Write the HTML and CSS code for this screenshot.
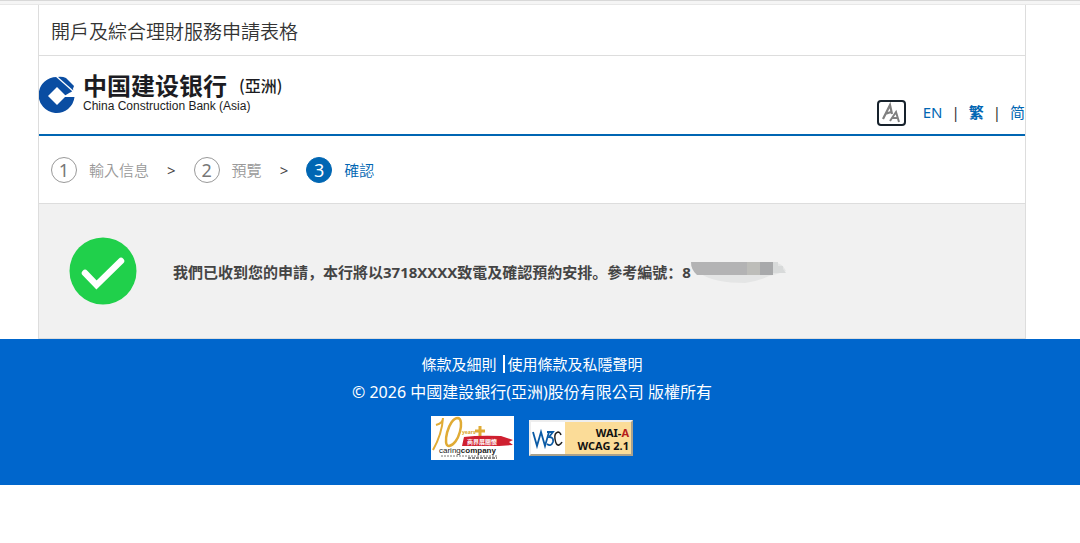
FILE: index.html
```html
<!DOCTYPE html>
<html lang="zh-Hant">
<head>
    <meta charset="UTF-8">
    <meta name="viewport" content="width=device-width, initial-scale=1.0">
    <title>開戶及綜合理財服務申請表格</title>
    <link rel="stylesheet" href="styles.css">
</head>
<body>
    <div class="top-strip"></div>

    <div class="container">
        <h1 class="page-title">開戶及綜合理財服務申請表格</h1>

        <header class="header">
            <a class="logo" href="#" aria-label="中国建设银行(亞洲)">
                <svg class="logo-mark" viewBox="0 0 36 38" aria-hidden="true">
                    <path fill="#0a4da2" d="M18 1A18 18 0 1 0 35.500 21H27L30.500 17.500 34.500 14 24 3Z"/>
                    <path fill="#0a4da2" d="M18 1q5-1 9 1l8 8-1.500 4Z"/>
                    <path stroke="#fff" stroke-width="1.300" d="M17.500.5L35 16"/>
                    <path fill="#fff" d="M18 11l9 9-9 9-9-9Z"/>
                    <path fill="#fff" d="M26 19.500L31 16.500 36 17v4H26Z"/>
                </svg>
                <span class="logo-text">
                    <span class="logo-cn" lang="zh-Hans">中国建设银行<small>(亞洲)</small></span>
                    <span class="logo-en">China Construction Bank (Asia)</span>
                </span>
            </a>
            <nav class="tools">
                <button class="font-btn" type="button" aria-label="字體大小">
                    <svg viewBox="0 0 24 22" fill="none" stroke="#808080" aria-hidden="true">
                        <path stroke-width="2.200" d="M4 17L11 3l2 9M6 12l6-2"/>
                        <path stroke-width="2" d="M11 19l6-9 3 10M13 16h6"/>
                    </svg>
                </button>
                <ul class="lang">
                    <li><a href="#">EN</a></li>
                    <li><a class="active" href="#">繁</a></li>
                    <li><a href="#">简</a></li>
                </ul>
            </nav>
        </header>

        <ol class="steps">
            <li class="step"><span class="num">1</span>輸入信息</li>
            <li class="step"><span class="num">2</span>預覽</li>
            <li class="step current" aria-current="step"><span class="num">3</span>確認</li>
        </ol>

        <main class="result">
            <svg class="tick" viewBox="0 0 68 68" aria-hidden="true">
                <circle cx="34" cy="34" r="33.500" fill="#20d04b"/>
                <path d="M16 36l11.500 12L52 24" fill="none" stroke="#fff" stroke-width="6.500" stroke-linecap="round"/>
            </svg>
            <p class="message" lang="zh-Hans">我們已收到您的申請，本行將以3718XXXX致電及確認預約安排。參考編號：8</p>
            <svg class="mask" viewBox="0 0 98 26" aria-hidden="true">
                <path fill="#e4e5e5" d="M0 4h82q10 1 13 9-8 3-17 5-10 5-24 7-30 0-44-9L0 8Z"/>
                <path fill="#d8dada" d="M82 4h5v4h5v3l3 4H82Z"/>
                <path fill="#b3b3b4" d="M0 4h82v13H6Q0 12 0 4Z"/>
                <path fill="#bdbdb9" d="M56 4h13v13H56Z"/>
                <path fill="#a8a9ab" d="M69 4h13v13H69Z"/>
            </svg>
        </main>
    </div>

    <footer class="footer">
        <ul class="footer-links">
            <li><a href="#">條款及細則</a></li>
            <li><a href="#">使用條款及私隱聲明</a></li>
        </ul>
        <p class="copyright">© 2026 中國建設銀行(亞洲)股份有限公司 版權所有</p>
        <div class="badges">
            <a href="#" aria-label="caring company">
                <svg class="badge-caring" viewBox="0 0 83 44">
                    <path fill="#fff" d="M0 0h83v44H0Z"/>
                    <g fill="none" stroke="#e0ab35">
                        <path stroke-width="2" d="M5 9Q12 7 12 2 11 18 2 34"/>
                        <path stroke-width="2.500" d="M27 2C17 2 11 31 18 30 28 29 34 3 27 2Z"/>
                        <path stroke-width="3" d="M49 10v10M44 15h10"/>
                    </g>
                    <path fill="#cf2030" d="M33 21q15-2 37-1l12 4-4 2 4 3-14 1H31Z"/>
                    <text class="caring-years" x="31" y="18">years</text>
                    <text class="caring-cn" x="36" y="28">商界展關懷</text>
                    <text class="caring-name" x="8" y="37">caring<tspan class="caring-bold">company</tspan></text>
                    <path stroke="#777" stroke-dasharray="2 1" d="M10 40h56"/>
                    <path stroke="#888" stroke-width="2" stroke-dasharray="3 1" d="M37 42h29"/>
                </svg>
            </a>
            <a href="#" aria-label="W3C WAI-A WCAG 2.1">
                <svg class="badge-w3c" viewBox="0 0 104 36">
                    <path fill="#a9a18c" d="M0 0h104v36H0Z"/>
                    <path fill="#eee" d="M0 0h104l-2 2H2v32l-2 2Z"/>
                    <path fill="#fff" d="M2 2h34v32H2Z"/>
                    <path fill="#fbdc98" d="M36 2h66v32H36Z"/>
                    <g fill="none" stroke="#0a5aa5" stroke-width="1.800">
                        <path d="M4 12l4 14 4-14 4 14 4-14"/>
                        <path d="M18 12h6l-4 5q5 0 4 5-2 5-6 2"/>
                        <path stroke="#222" stroke-width="1.500" d="M32 15q-1-3-3-3-4 1-3 7 1 7 4 6 2-1 3-3"/>
                    </g>
                    <text class="w3c-text" x="100" y="17">WAI-<tspan class="w3c-level">A</tspan></text>
                    <text class="w3c-text" x="100" y="30">WCAG 2.1</text>
                </svg>
            </a>
        </div>
    </footer>
</body>
</html>
```
FILE: styles.css
```css
:root {
    --blue: #0066b3;
    --footer-blue: #0066cc;
    --line: #dddddd;
    --text: #333;
    --grey: #999;
}

* {
    margin: 0;
    padding: 0;
    box-sizing: border-box;
}

body {
    font-family: "Noto Sans", "Noto Sans CJK TC", sans-serif;
    font-size: 15px;
    color: var(--text);
    background-color: white;
}

a {
    color: inherit;
    text-decoration: none;
}

ul,
ol {
    list-style: none;
}

svg {
    display: block;
}

.top-strip {
    height: 5px;
    background-color: #f5f5f5;
    border-top: 1px solid #d8d8d8;
    border-bottom: 1px solid #e8e8e8;
}

.container {
    margin: 0 54px 0 38px;
    border: 1px solid var(--line);
    border-top: none;
}

.page-title {
    height: 51px;
    padding: 0 12px;
    border-bottom: 1px solid var(--line);
    font-family: "Noto Sans CJK TC", sans-serif;
    font-size: 19px;
    font-weight: 350;
    line-height: 52px;
}

.header {
    display: flex;
    justify-content: space-between;
    height: 80px;
    border-bottom: 2px solid var(--blue);
}

.logo {
    display: flex;
    align-items: center;
    gap: 8px;
}

.logo-mark {
    width: 36px;
    height: 38px;
}

.logo-text {
    display: flex;
    flex-direction: column;
    gap: 2px;
    padding-bottom: 4px;
    color: #1c1c22;
}

.logo-cn {
    display: flex;
    align-items: center;
    gap: 12px;
    font-family: "Noto Sans CJK SC", sans-serif;
    font-size: 24px;
    font-weight: 700;
    line-height: 24px;
}

.logo-cn small {
    font-size: 16px;
    font-weight: 500;
}

.logo-en {
    font-family: "Liberation Sans", Arial, sans-serif;
    font-size: 12px;
    line-height: 14px;
}

.tools {
    display: flex;
    align-items: flex-end;
    gap: 17px;
    padding-bottom: 8px;
}

.font-btn {
    width: 29px;
    height: 26px;
    border: 2px solid #17222c;
    border-radius: 4px;
    background-color: white;
}

.font-btn svg {
    width: 24px;
    height: 22px;
}

.lang {
    display: flex;
    color: var(--blue);
    line-height: 28px;
}

.lang li + li::before {
    content: "|";
    padding: 0 9px;
    color: #333;
}

.lang .active {
    font-weight: bold;
}

.steps {
    display: flex;
    align-items: center;
    height: 67px;
    padding: 0 12px;
}

.step {
    display: flex;
    align-items: center;
    color: var(--grey);
    font-family: "Noto Sans CJK TC", sans-serif;
    font-weight: 350;
}

.step + .step::before {
    content: ">";
    padding: 0 18px;
    color: #444;
    font-family: "Noto Sans", sans-serif;
    font-weight: 400;
}

.num {
    width: 26px;
    height: 26px;
    margin-right: 12px;
    border: 1px solid var(--grey);
    border-radius: 50%;
    color: #777;
    font-family: "Noto Sans", sans-serif;
    font-size: 18px;
    font-weight: 400;
    line-height: 24px;
    text-align: center;
}

.current {
    color: var(--blue);
}

.current .num {
    border-color: var(--blue);
    background-color: var(--blue);
    color: white;
}

.result {
    display: flex;
    align-items: center;
    height: 135px;
    padding: 0 30px;
    border-top: 1px solid var(--line);
    background-color: #f1f1f1;
}

.tick {
    width: 68px;
    height: 68px;
    margin-right: 36px;
}

.message {
    font-family: "Open Sans", "Noto Sans CJK SC", sans-serif;
    font-weight: bold;
    color: #444;
}

.mask {
    width: 98px;
    height: 26px;
}

.footer {
    display: flex;
    flex-direction: column;
    align-items: center;
    padding: 11px 16px 25px 0;
    background-color: var(--footer-blue);
    color: white;
    line-height: 28px;
}

.footer-links {
    display: flex;
    align-items: center;
}

.footer-links li + li {
    display: flex;
    align-items: center;
}

.footer-links li + li::before {
    content: "";
    width: 2px;
    height: 18px;
    margin: 0 3px 0 6px;
    background-color: white;
}

.copyright {
    font-size: 16px;
}

.badges {
    display: flex;
    align-items: center;
    gap: 15px;
    margin-top: 10px;
}

.badge-caring {
    width: 83px;
    height: 44px;
}

.caring-years {
    fill: #d9a62e;
    font-size: 5px;
    font-weight: bold;
}

.caring-cn {
    fill: white;
    font-size: 6px;
    font-weight: bold;
}

.caring-name {
    fill: #222;
    font-family: "Liberation Sans", Arial, sans-serif;
    font-size: 8px;
}

.caring-bold {
    font-weight: bold;
}

.badge-w3c {
    width: 104px;
    height: 36px;
}

.w3c-text {
    fill: #111;
    font-family: "Noto Sans", sans-serif;
    font-size: 11px;
    font-weight: bold;
    text-anchor: end;
}

.w3c-level {
    fill: #b51c1c;
}
```
